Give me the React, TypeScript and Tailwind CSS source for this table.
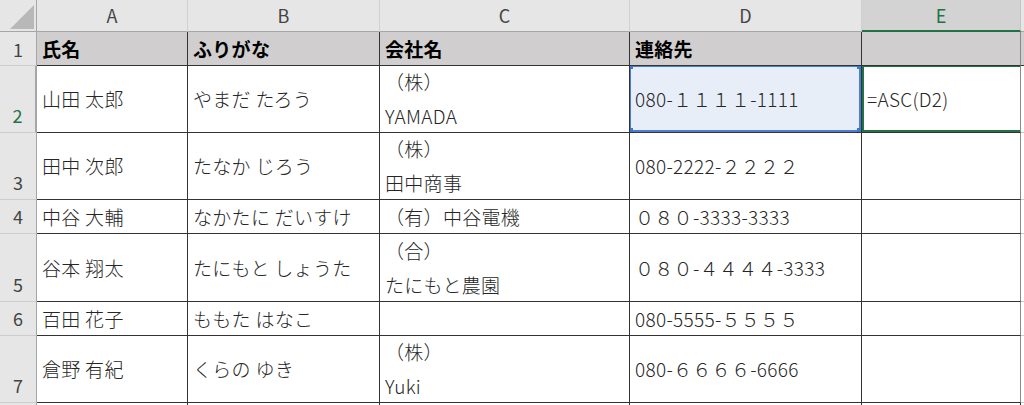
const font = "font-['Noto_Sans_CJK_JP','Noto_Sans',sans-serif]";

const rows = [
  { n: 2, name: "山田 太郎", kana: "やまだ たろう", co: ["（株）", "YAMADA"], tel: "080-１１１１-1111" },
  { n: 3, name: "田中 次郎", kana: "たなか じろう", co: ["（株）", "田中商事"], tel: "080-2222-２２２２" },
  { n: 4, name: "中谷 大輔", kana: "なかたに だいすけ", co: ["（有）中谷電機"], tel: "０８０-3333-3333" },
  { n: 5, name: "谷本 翔太", kana: "たにもと しょうた", co: ["（合）", "たにもと農園"], tel: "０８０-４４４４-3333" },
  { n: 6, name: "百田 花子", kana: "ももた はなこ", co: [], tel: "080-5555-５５５５" },
  { n: 7, name: "倉野 有紀", kana: "くらの ゆき", co: ["（株）", "Yuki"], tel: "080-６６６６-6666" },
];

const colHead = "flex items-center justify-center bg-[#e6e6e6] border-r border-b border-r-[#d0d0d0] border-b-[#a6a6a6] text-[18px] font-normal text-[#444]";
const rowHead = "flex justify-center bg-[#e6e6e6] border-r border-b border-r-[#a6a6a6] border-b-[#cdcdcd] text-[18px] font-normal text-[#444] leading-[34px]";
const cell = "flex flex-col justify-center pl-[5px] border-r border-b border-[#333] leading-[34px] tracking-[0.3px] whitespace-nowrap overflow-hidden";

function Handle({ pos }: { pos: string }) {
  return <span className={`absolute w-[5px] h-[5px] bg-[#3f76d0] ${pos}`} />;
}

export default function App() {
  return (
    <div className={`${font} w-[1024px] h-[405px] overflow-hidden bg-white text-[#262626] text-[19px] font-light`}>
      <div className="grid grid-cols-[37px_151px_192px_250px_232px_159px_1fr] grid-rows-[32px_34px_67px_67px_34px_68px_34px_67px_1fr] h-full">
        {/* corner */}
        <div className="relative bg-[#e6e6e6] border-r border-b border-r-[#a6a6a6] border-b-[#a6a6a6]">
          <svg className="absolute left-0 top-0" width="37" height="32">
            <polygon points="34,5 34,29 10,29" fill="#b8b8b8" />
          </svg>
        </div>
        {["A", "B", "C", "D"].map((c) => (
          <div key={c} className={colHead}>{c}</div>
        ))}
        <div className="flex items-center justify-center bg-[#d3d3d3] border-r border-r-[#c4c4c4] border-b-2 border-b-[#217346] text-[18px] font-normal text-[#217346]">E</div>
        <div className="bg-[#e6e6e6] border-b border-b-[#a6a6a6]" />

        {/* row 1 */}
        <div className={`${rowHead} items-center`}>1</div>
        {["氏名", "ふりがな", "会社名", "連絡先", ""].map((t, i) => (
          <div key={i} className={`${cell} bg-[#d0cece] font-bold text-black ${i === 4 ? "border-r-[#8a8a8a]" : ""}`}>{t}</div>
        ))}
        <div className="bg-[#d0cece] border-b border-[#333]" />

        {rows.map((r) => {
          const active = r.n === 2;
          return [
            <div
              key={`h${r.n}`}
              className={`${rowHead} items-end ${active ? "bg-[#dedede] text-[#217346] border-r-2 border-r-[#217346]" : ""}`}
            >
              {r.n}
            </div>,
            <div key={`a${r.n}`} className={cell}>{r.name}</div>,
            <div key={`b${r.n}`} className={cell}>{r.kana}</div>,
            <div key={`c${r.n}`} className={cell}>
              {r.co.map((t) => (
                <div key={t}>{t}</div>
              ))}
            </div>,
            <div key={`d${r.n}`} className={`${cell} relative ${active ? "bg-[#e8eef8]" : ""}`}>
              {r.tel}
              {active && (
                <div className="absolute -left-[1px] -top-[1px] -right-0 -bottom-0 border-2 border-[#4a7fd4] pointer-events-none">
                  <Handle pos="-left-[3px] -top-[3px]" />
                  <Handle pos="-right-[3px] -top-[3px]" />
                  <Handle pos="-left-[3px] -bottom-[3px]" />
                  <Handle pos="-right-[3px] -bottom-[3px]" />
                </div>
              )}
            </div>,
            <div key={`e${r.n}`} className={`${cell} relative border-r-[#8a8a8a]`}>
              {active && (
                <>
                  <span>=ASC(D2)</span>
                  <div className="absolute left-0 -top-[1px] -right-[4px] -bottom-0 border-l-2 border-y-2 border-[#217346] pointer-events-none" />
                </>
              )}
            </div>,
            <div key={`f${r.n}`} className="border-b border-[#c8c8c8]" />,
          ];
        })}

        <div className="bg-[#e6e6e6] border-r border-r-[#a6a6a6]" />
        {[0, 1, 2, 3, 4].map((i) => (
          <div key={i} className="border-r border-[#333]" />
        ))}
        <div />
      </div>
    </div>
  );
}
